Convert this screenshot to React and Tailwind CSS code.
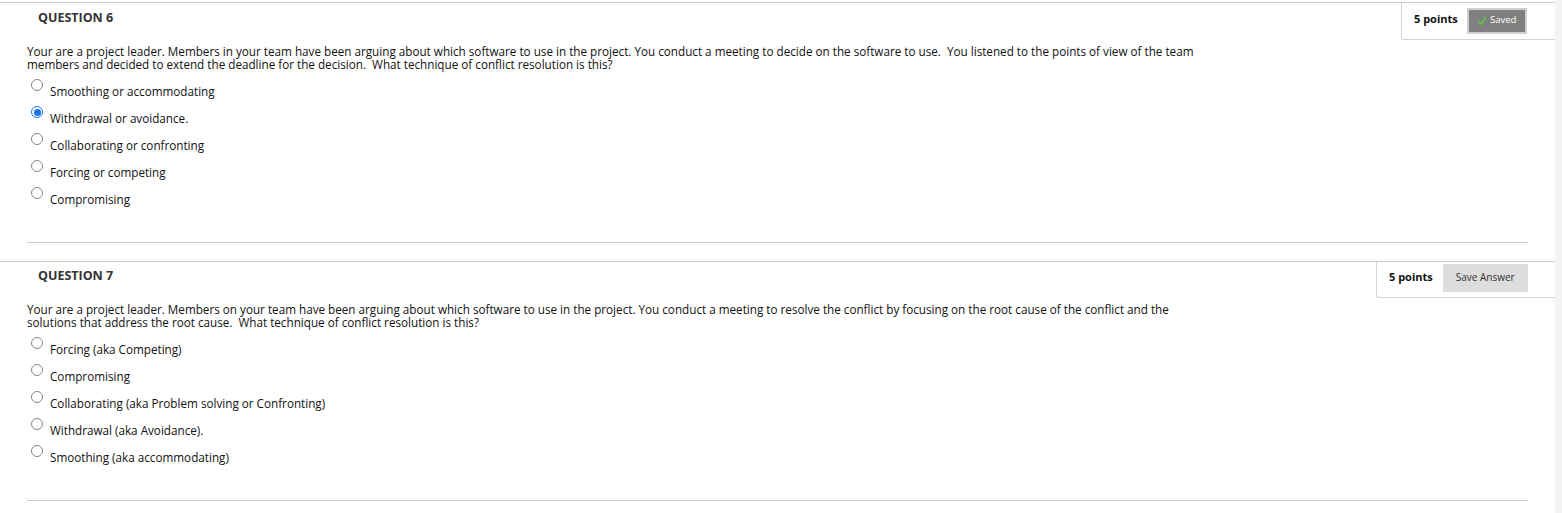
import React from "react";

const questions = [
  {
    num: 6,
    lines: [
      "Your are a project leader. Members in your team have been arguing about which software to use in the project. You conduct a meeting to decide on the software to use.  You listened to the points of view of the team",
      "members and decided to extend the deadline for the decision.  What technique of conflict resolution is this?",
    ],
    options: [
      "Smoothing or accommodating",
      "Withdrawal or avoidance.",
      "Collaborating or confronting",
      "Forcing or competing",
      "Compromising",
    ],
    selected: 1,
    saved: true,
  },
  {
    num: 7,
    lines: [
      "Your are a project leader. Members on your team have been arguing about which software to use in the project. You conduct a meeting to resolve the conflict by focusing on the root cause of the conflict and the",
      "solutions that address the root cause.  What technique of conflict resolution is this?",
    ],
    options: [
      "Forcing (aka Competing)",
      "Compromising",
      "Collaborating (aka Problem solving or Confronting)",
      "Withdrawal (aka Avoidance).",
      "Smoothing (aka accommodating)",
    ],
    selected: -1,
    saved: false,
  },
];

const Radio = ({ checked }) =>
  checked ? (
    <span className="mt-[2px] flex h-[12px] w-[12px] shrink-0 items-center justify-center rounded-full border border-[#1a73e8] bg-white">
      <span className="h-[7px] w-[7px] rounded-full bg-[#1a73e8]"></span>
    </span>
  ) : (
    <span className="mt-[2px] h-[12px] w-[12px] shrink-0 rounded-full border border-[#858585] bg-white"></span>
  );

const PointsBox = ({ saved }) =>
  saved ? (
    <div className="flex h-[37px] w-[154px] items-center rounded-bl-[3px] border-b border-l border-[#d4d4d4] pl-[12px]">
      <span className="-mt-[3px] text-[11px] font-bold text-[#111]">5 points</span>
      <div className="-mt-[1px] ml-[9px] flex h-[26px] w-[60px] items-center justify-center gap-[3px] border-2 border-[#cfcfcf] bg-[#808080]">
        <svg width="10" height="9" viewBox="0 0 10 9">
          <path d="M1 5 L4 8 L9 1" stroke="#5cc04a" strokeWidth="2" fill="none" />
        </svg>
        <span className="-mt-[1px] text-[9.5px] text-white">Saved</span>
      </div>
    </div>
  ) : (
    <div className="flex h-[36px] w-[179px] items-center rounded-bl-[3px] border-b border-l border-[#d4d4d4] pl-[12px]">
      <span className="-mt-[4px] text-[11px] font-bold text-[#111]">5 points</span>
      <div className="-mt-[4px] ml-[10px] flex h-[28px] w-[85px] items-center justify-center bg-[#dddddd]">
        <span className="text-[10px] text-[#333]">Save Answer</span>
      </div>
    </div>
  );

const Question = ({ q, first }) => (
  <div className={first ? "mt-[2px]" : "mt-[18px]"}>
    <div className="flex items-start justify-between border-t border-[#cccccc]">
      <h3 className={`pl-[38px] text-[12.5px] font-bold leading-[13px] text-[#333] ${first ? "pt-[8px]" : "pt-[7px]"}`}>
        QUESTION {q.num}
      </h3>
      <PointsBox saved={q.saved} />
    </div>
    <div className="mt-[5px] pl-[27px] text-[11.7px] leading-[13px] text-[#111]">
      {q.lines.map((l, i) => (
        <p key={i} className="whitespace-pre">
          {l}
        </p>
      ))}
    </div>
    <div className="mt-[6px]">
      {q.options.map((opt, i) => (
        <div key={i} className="flex h-[27px] items-start gap-[7px] pl-[31px]">
          <Radio checked={i === q.selected} />
          <span className="mt-[8px] text-[11.7px] leading-[13px] text-[#111]">{opt}</span>
        </div>
      ))}
    </div>
    <div className="ml-[27px] mt-[30px] w-[1501px] border-t border-[#cccccc]"></div>
  </div>
);

export default function App() {
  return (
    <div className="flex min-h-[513px] bg-white font-['Open_Sans',sans-serif]">
      <div className="w-[1555px]">
        {questions.map((q, i) => (
          <Question key={q.num} q={q} first={i === 0} />
        ))}
      </div>
      <div className="flex-1 bg-[#f4f4f4]"></div>
    </div>
  );
}
